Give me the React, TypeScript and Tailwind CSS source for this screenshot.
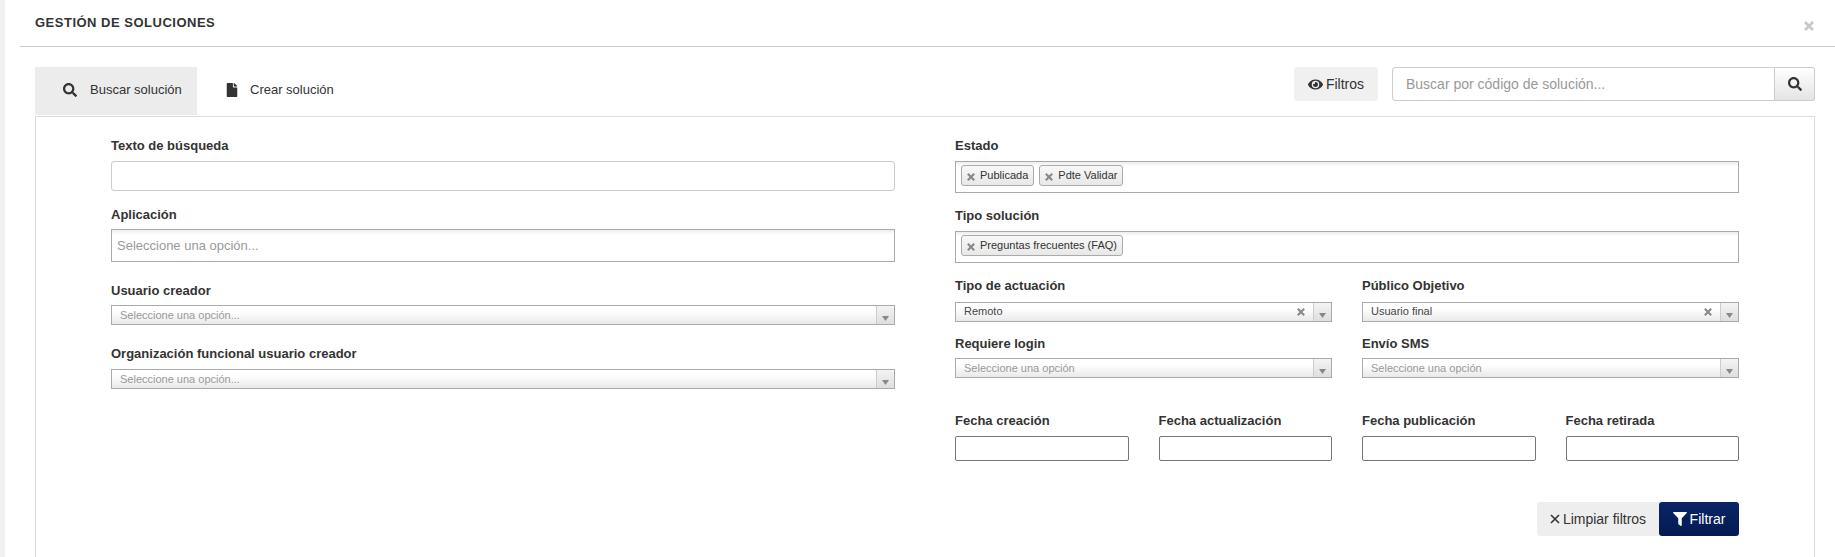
import { ReactNode } from 'react';
import { FaEye, FaFile, FaFilter, FaSearch } from 'react-icons/fa';

interface CrossProps {
    size: number;
    weight: number;
    className?: string;
}

function Cross({ size, weight, className = '' }: CrossProps) {
    return (
        <svg width={size} height={size} viewBox="0 0 10 10" className={`shrink-0 ${className}`}>
            <path d="M1 1l8 8M9 1l-8 8" fill="none" stroke="currentColor" strokeWidth={weight} />
        </svg>
    );
}

interface LabelProps {
    children: ReactNode;
    className?: string;
}

function Label({ children, className = '' }: LabelProps) {
    return <div className={`h-[18px] text-[13px] leading-[20px] font-bold text-[#333] whitespace-nowrap ${className}`}>{children}</div>;
}

interface SelectProps {
    value?: string;
    placeholder?: string;
    clearable?: boolean;
    className?: string;
}

function SingleSelect({ value, placeholder = 'Seleccione una opción...', clearable = false, className = '' }: SelectProps) {
    return (
        <div className={`flex h-5 border border-[#aaa] bg-gradient-to-b from-white from-30% to-[#e9e9e9] ${className}`}>
            <div className={`flex-1 pl-[8px] text-[11px] whitespace-nowrap ${value ? 'leading-[16px] text-[#444]' : 'leading-[18px] text-[#999]'}`}>
                {value || placeholder}
            </div>
            {clearable && (
                <div className="flex w-[18px] items-center justify-start pl-[2px] text-[#888]">
                    <Cross size={8} weight={2.6} />
                </div>
            )}
            <div className="flex w-[18px] items-end justify-center border-l border-[#ccc] bg-gradient-to-b from-[#f4f4f4] to-[#dedede] pb-[3px]">
                <svg width="7" height="5" viewBox="0 0 7 5" className="text-[#888]">
                    <path d="M0 0h7L3.5 5z" fill="currentColor" />
                </svg>
            </div>
        </div>
    );
}

function Chip({ label }: { label: string }) {
    return (
        <div className="flex h-[21px] items-center rounded-[3px] border border-[#aaa] bg-gradient-to-b from-[#f8f8f8] to-[#e8e8e8] pr-[5px] pl-[5px]">
            <Cross size={8} weight={2.6} className="mt-[2px] mr-[5px] text-[#888]" />
            <span className="text-[11px] leading-none text-[#333] whitespace-nowrap">{label}</span>
        </div>
    );
}

function MultiSelect({ chips }: { chips: string[] }) {
    return (
        <div className="flex h-[32px] items-start gap-[5px] border border-[#aaa] bg-gradient-to-b from-[#eee] from-[1%] to-white to-[15%] pt-[3px] pl-[5px]">
            {chips.map((chip) => (
                <Chip key={chip} label={chip} />
            ))}
        </div>
    );
}

function DateField({ label }: { label: string }) {
    return (
        <div className="flex-1">
            <Label>{label}</Label>
            <div className="mt-[7px] h-[25px] rounded-[2px] border border-[#767676] bg-white" />
        </div>
    );
}

export default function App() {
    return (
        <div className="flex h-[557px] w-full overflow-hidden bg-white font-['Liberation_Sans',Arial,sans-serif]">
            <div className="w-[5px] shrink-0 bg-[#f1f1f1]" />
            <div className="min-w-0 flex-1">
                <div className="ml-[15px] flex h-[47px] items-start justify-between border-b border-[#ccc] pr-[21px] pl-[15px]">
                    <div className="pt-[14px] text-[13px] leading-[18px] font-bold tracking-[0.5px] text-[#333]">GESTIÓN DE SOLUCIONES</div>
                    <Cross size={10} weight={2.6} className="mt-[21px] text-[#c8c8c8]" />
                </div>

                <div className="pt-[20px] pr-[20px] pl-[30px]">
                    <div className="flex h-[49px] items-start justify-between">
                        <div className="flex text-[13px] text-[#333]">
                            <div className="flex h-[48px] w-[162px] items-center bg-[#ececec] pb-[2px] pl-[28px]">
                                <FaSearch className="mr-[13px] h-[14px] w-[14px]" />
                                <span>Buscar solución</span>
                            </div>
                            <div className="flex h-[48px] items-center pb-[2px] pl-[29px]">
                                <FaFile className="mr-[12px] h-[14px] w-[12px]" />
                                <span>Crear solución</span>
                            </div>
                        </div>
                        <div className="flex h-[34px]">
                            <div className="mr-[14px] flex w-[84px] items-center justify-center gap-[3px] rounded-[3px] bg-[#f0f0f0] text-[14px] text-[#333]">
                                <FaEye className="h-[15px] w-[15px]" />
                                <span>Filtros</span>
                            </div>
                            <div className="flex w-[383px] items-center rounded-l-[3px] border border-[#ccc] bg-white pl-[13px] text-[14px] text-[#999]">
                                Buscar por código de solución...
                            </div>
                            <div className="flex w-[40px] items-center justify-center rounded-r-[3px] border border-l-0 border-[#ccc] bg-gradient-to-b from-white to-[#e4e4e4] text-[#333]">
                                <FaSearch className="h-[14px] w-[14px]" />
                            </div>
                        </div>
                    </div>

                    <div className="grid h-[500px] grid-cols-2 gap-x-[60px] border border-[#ddd] px-[75px] pt-[19px]">
                        <div>
                            <Label>Texto de búsqueda</Label>
                            <div className="mt-[7px] h-[30px] rounded-[3px] border border-[#ccc] bg-white" />
                            <Label className="mt-[14px]">Aplicación</Label>
                            <div className="mt-[6px] h-[33px] border border-[#aaa] bg-gradient-to-b from-[#eee] from-[1%] to-white to-[15%] pl-[5px] text-[13px] leading-[31px] text-[#999]">
                                Seleccione una opción...
                            </div>
                            <Label className="mt-[19px]">Usuario creador</Label>
                            <SingleSelect className="mt-[6px]" />
                            <Label className="mt-[19px]">Organización funcional usuario creador</Label>
                            <SingleSelect className="mt-[7px]" />
                        </div>

                        <div>
                            <Label>Estado</Label>
                            <div className="mt-[7px]">
                                <MultiSelect chips={['Publicada', 'Pdte Validar']} />
                            </div>
                            <Label className="mt-[13px]">Tipo solución</Label>
                            <div className="mt-[7px]">
                                <MultiSelect chips={['Preguntas frecuentes (FAQ)']} />
                            </div>
                            <div className="mt-[13px] grid grid-cols-2 gap-x-[30px]">
                                <div>
                                    <Label>Tipo de actuación</Label>
                                    <SingleSelect className="mt-[8px]" value="Remoto" clearable />
                                </div>
                                <div>
                                    <Label>Público Objetivo</Label>
                                    <SingleSelect className="mt-[8px]" value="Usuario final" clearable />
                                </div>
                                <div className="mt-[12px]">
                                    <Label>Requiere login</Label>
                                    <SingleSelect className="mt-[6px]" placeholder="Seleccione una opción" />
                                </div>
                                <div className="mt-[12px]">
                                    <Label>Envío SMS</Label>
                                    <SingleSelect className="mt-[6px]" placeholder="Seleccione una opción" />
                                </div>
                            </div>
                            <div className="mt-[33px] flex gap-x-[30px]">
                                <DateField label="Fecha creación" />
                                <DateField label="Fecha actualización" />
                                <DateField label="Fecha publicación" />
                                <DateField label="Fecha retirada" />
                            </div>
                            <div className="mt-[41px] flex justify-end">
                                <div className="flex h-[34px] w-[122px] items-center justify-center gap-[3px] rounded-l-[3px] bg-[#eee] text-[14px] text-[#333]">
                                    <Cross size={10} weight={1.6} />
                                    <span>Limpiar filtros</span>
                                </div>
                                <div className="flex h-[34px] w-[80px] items-center justify-center gap-[3px] rounded-[3px] bg-gradient-to-b from-[#0a2568] to-[#041a52] text-[14px] text-white">
                                    <FaFilter className="h-[14px] w-[14px]" />
                                    <span>Filtrar</span>
                                </div>
                            </div>
                        </div>
                    </div>
                </div>
            </div>
        </div>
    );
}
